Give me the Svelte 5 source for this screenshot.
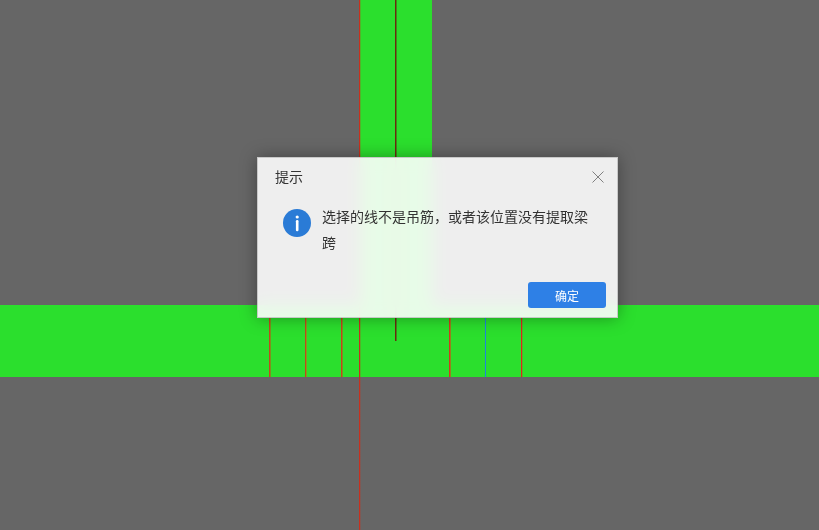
<script>
  // lines drawn on the plan view: x, top, height, left and right pixel colour
  const lines = [
    { x: 269, top: 318, height: 59, a: "#c04a1c", b: "#80901e" },
    { x: 305, top: 318, height: 59, a: "#c04a1c", b: "#80a01e" },
    { x: 341, top: 318, height: 59, a: "#c8441c", b: "#80901e" },
    { x: 359, top: 0, height: 530, a: "#c8301e", b: "rgba(200, 48, 30, 0.25)" },
    { x: 395, top: 0, height: 341, a: "#6e2a10", b: "#3f8a1c" },
    { x: 449, top: 318, height: 59, a: "#d03c1c", b: "#98801e" },
    { x: 485, top: 318, height: 59, a: "#1c86de", b: "transparent" },
    { x: 521, top: 318, height: 59, a: "#e0261c", b: "rgba(224, 38, 28, 0.25)" }
  ];
</script>

<div class="canvas">
  <div class="beam vertical"></div>
  <div class="beam horizontal"></div>
  {#each lines as line}
    <div class="line" style="left: {line.x}px; top: {line.top}px; height: {line.height}px; background: linear-gradient(90deg, {line.a} 50%, {line.b} 50%)"></div>
  {/each}

  <div class="dialog">
    <div class="dialog-header">
      <span class="title">提示</span>
      <button class="close" aria-label="关闭">
        <svg viewBox="0 0 12 12" width="12" height="12" fill="none" stroke="#808080" stroke-width="1">
          <line x1="0.5" y1="0.5" x2="11.5" y2="11.5"></line>
          <line x1="11.5" y1="0.5" x2="0.5" y2="11.5"></line>
        </svg>
      </button>
    </div>
    <div class="dialog-body">
      <svg class="info" viewBox="0 0 28 28" width="28" height="28">
        <circle cx="14" cy="14" r="14" fill="#2a7bd6"></circle>
        <circle cx="14.2" cy="8" r="1.6" fill="#fff"></circle>
        <rect x="12.9" y="11" width="2.6" height="11.2" rx="1.2" fill="#fff"></rect>
      </svg>
      <p>选择的线不是吊筋，或者该位置没有提取梁跨</p>
    </div>
    <div class="dialog-footer">
      <button class="ok">确定</button>
    </div>
  </div>
</div>

<style>
  :global(body) {
    margin: 0;
    background: #666;
  }

  .canvas {
    position: relative;
    width: 819px;
    height: 530px;
    overflow: hidden;
    background: #666;
    font-family: "Noto Sans CJK SC", "Liberation Sans", sans-serif;
  }

  .beam {
    position: absolute;
    background: #2bdf2d;
  }

  .vertical {
    left: 360px;
    top: 0;
    width: 72px;
    height: 377px;
  }

  .horizontal {
    left: 0;
    top: 305px;
    width: 819px;
    height: 72px;
  }

  .line {
    position: absolute;
    width: 2px;
  }

  .dialog {
    position: absolute;
    left: 257px;
    top: 157px;
    width: 361px;
    height: 161px;
    box-sizing: border-box;
    display: flex;
    flex-direction: column;
    background: rgba(255, 255, 255, 0.889);
    backdrop-filter: blur(8px);
    box-shadow: 0 0 16px rgba(0, 0, 0, 0.35);
    border: 1px solid rgba(195, 195, 195, 0.9);
    color: #333;
  }

  .dialog-header {
    display: flex;
    align-items: center;
    justify-content: space-between;
    height: 36px;
    padding: 2px 13px 0 17px;
    box-sizing: border-box;
  }

  .title {
    font-size: 14px;
    margin-top: -2px;
  }

  .close {
    display: flex;
    padding: 0;
    border: none;
    background: none;
  }

  .dialog-body {
    flex: 1;
    display: flex;
    align-items: flex-start;
    gap: 11px;
    padding: 15px 24px 0 25px;
  }

  .info {
    flex: none;
  }

  p {
    margin: -6px 0 0;
    font-size: 14px;
    line-height: 26px;
  }

  .dialog-footer {
    display: flex;
    justify-content: flex-end;
    padding: 0 11px 9px 0;
  }

  .ok {
    width: 78px;
    height: 26px;
    padding: 0;
    border: none;
    border-radius: 3px;
    background: #2e80e6;
    color: #fff;
    font-family: inherit;
    font-size: 12px;
  }
</style>
